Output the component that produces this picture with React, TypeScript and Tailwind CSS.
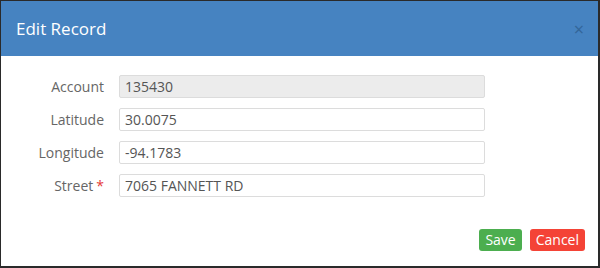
const fields = [
  { label: 'Account', value: '135430', disabled: true, required: false },
  { label: 'Latitude', value: '30.0075', disabled: false, required: false },
  { label: 'Longitude', value: '-94.1783', disabled: false, required: false },
  { label: 'Street', value: '7065 FANNETT RD', disabled: false, required: true },
];

export default function App() {
  return (
    <div className="flex h-[268px] w-[600px] flex-col border-t border-l border-r-2 border-b-2 border-[#2a2a2a] bg-white font-['Open_Sans',sans-serif]">
      <div className="flex h-[55px] shrink-0 items-center justify-between bg-[#4683c1] pl-[15px] pr-[14px]">
        <h2 className="text-[17px] font-normal text-white">Edit Record</h2>
        <button className="text-[18px] leading-none text-[#2f5f8f] opacity-80">×</button>
      </div>

      <div className="flex flex-col gap-[10px] pt-[19px]">
        {fields.map((f) => (
          <div key={f.label} className="flex items-center">
            <label className="w-[104px] pr-[1px] text-right text-[14px] text-[#666]">
              {f.label}
              {f.required ? <span className="ml-[3px] text-[#e53935]">*</span> : null}
            </label>
            <input
              readOnly
              disabled={f.disabled}
              value={f.value}
              className={`ml-[14px] h-[23px] w-[366px] rounded-[2px] border border-[#dcdcdc] px-[5px] text-[14px] text-[#555] ${f.disabled ? 'bg-[#ececec]' : 'bg-white'}`}
            />
          </div>
        ))}
      </div>

      <div className="mt-auto flex justify-end gap-2 pb-[15px] pr-[13px]">
        <button className="h-[22px] rounded-[3px] bg-[#4cae4f] px-[6px] text-[14px] leading-none text-white">Save</button>
        <button className="h-[22px] rounded-[3px] bg-[#f44336] px-[6px] text-[14px] leading-none text-white">Cancel</button>
      </div>
    </div>
  );
}
